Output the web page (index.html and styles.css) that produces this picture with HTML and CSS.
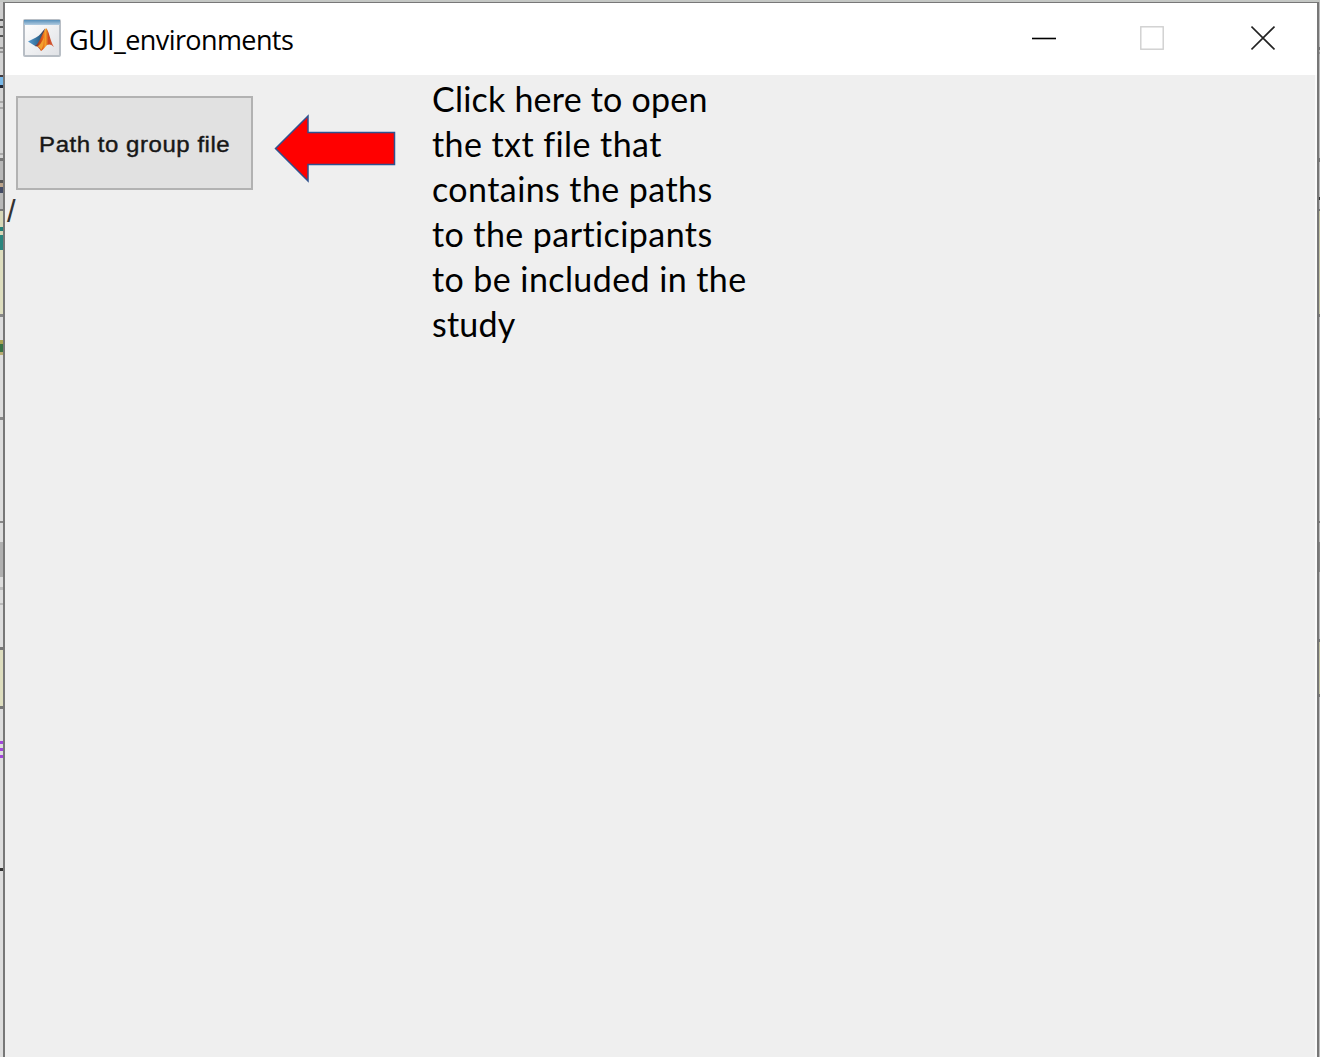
FILE: index.html
```html
<!DOCTYPE html>
<html lang="en">
<head>
<meta charset="utf-8">
<title>GUI_environments</title>
<link rel="stylesheet" href="styles.css">
</head>
<body>
<div class="desktop">
  <div class="edge edge-left"></div>
  <main class="window">
    <header class="titlebar">
      <svg class="app-icon" width="38" height="38" viewBox="0 0 38 38">
        <defs>
          <linearGradient id="bar" x2="0" y2="1"><stop stop-color="#5790bb"/><stop offset="1" stop-color="#b3cce0"/></linearGradient>
          <linearGradient id="paper" x2="1" y2="1"><stop stop-color="#fff"/><stop offset="1" stop-color="#dfe1e5"/></linearGradient>
          <linearGradient id="peak"><stop stop-color="#702f32"/><stop offset=".38" stop-color="#e35516"/><stop offset=".55" stop-color="#f5a12a"/><stop offset=".72" stop-color="#ce461c"/><stop offset="1" stop-color="#d66b50"/></linearGradient>
          <linearGradient id="wing"><stop stop-color="#559bd0"/><stop offset=".65" stop-color="#2e668f"/><stop offset="1" stop-color="#583440"/></linearGradient>
        </defs>
        <rect x="1" y="1" width="36" height="36" rx="1" fill="url(#paper)" stroke="#b8bec5" stroke-width="2"/>
        <path d="M1 1h36v5H1z" fill="url(#bar)"/>
        <path d="M5 22.500l8-4c4-2 6-6 9-9l-3 15-6 3z" fill="url(#wing)"/>
        <path d="M12 27c4-2 7-12 11-18 3 2 4 13 8 19-3-3-5-3-7-2-2 2-4 5-6 6-2-3-3-5-6-5z" fill="url(#peak)"/>
        <path d="M14 27.500c3-1 5-5 7-9 0 6-1 10-3 13-1-3-2-4-4-4z" fill="#f2a02f"/>
      </svg>
      <h1 class="title">GUI_environments</h1>
      <div class="controls">
        <svg width="24" height="26" viewBox="0 0 24 26"><path d="M0 13.500h24" stroke="#000" stroke-width="1.6"/></svg>
        <svg width="24" height="26" viewBox="0 0 24 26"><rect x=".8" y="1.800" width="22.400" height="22.400" fill="none" stroke="#cfcfcf" stroke-width="1.4"/></svg>
        <svg class="close" width="24" height="26" viewBox="0 0 24 26"><path d="M.5 1.500l23 23M23.500 1.500l-23 23" stroke="#222" stroke-width="1.6"/></svg>
      </div>
    </header>
    <div class="content">
      <div class="picker">
        <button class="path-button" type="button"><span class="button-label">Path to group file</span></button>
        <div class="path">/</div>
      </div>
      <svg class="arrow" width="122" height="70" viewBox="0 0 122 70">
        <path d="M1.500 35.500L34 3V19.500H120.500V51.500H34V68Z" fill="#f00" stroke="#2f528f" stroke-width="1.500"/>
      </svg>
      <p class="note">
        <span class="tight">Click here to open</span>
        <span>the txt file that</span>
        <span>contains the paths</span>
        <span>to the participants</span>
        <span>to be included in the</span>
        <span class="tight">study</span>
      </p>
    </div>
  </main>
  <div class="edge edge-right"></div>
</div>
</body>
</html>
```
FILE: styles.css
```css
body {
  margin: 0;
  overflow: hidden;
}

.desktop {
  box-sizing: border-box;
  display: flex;
  width: 1320px;
  height: 1057px;
  padding-top: 2px;
  background: linear-gradient(#c4c7c4 0 2px, transparent 2px), #d4d4d4;
}

.edge {
  flex: none;
  background-repeat: no-repeat;
}

/* Slivers of the editor window that stays open behind this one. */
.edge-left {
  width: 3px;
  background-image: linear-gradient(
    #cdcdcd 0 17px, #555 17px 19px, #cdcdcd 19px 24px, #555 24px 26px,
    #cdcdcd 26px 33px, #555 33px 35px, #cdcdcd 35px 45px, #888 45px 47px,
    #cdcdcd 47px 49px, #999 49px 51px, #d4d4d4 51px 73px, #443c40 73px 75px,
    #78b8e8 75px 83px, #202838 83px 86px, #d4d4d4 86px 99px, #aaa 99px 101px,
    #d4d4d4 101px 105px, #aaa 105px 107px, #d4d4d4 107px 151px, #aaa 151px 153px,
    #d4d4d4 153px 156px, #777 156px 159px, #b8b8b8 159px 178px, #555 178px 181px,
    #bba48b 181px 185px, #444c65 185px 191px, #b8b8b8 191px 207px, #777 207px 209px,
    #d8d8b8 209px 225px, #228078 225px 229px, #d8d8b8 229px 233px, #2b867e 233px 248px,
    #dedebf 248px 312px, #888 312px 315px, #ddd 315px 338px, #a9a454 338px 342px,
    #397346 342px 350px, #b9ad72 350px 353px, #ddd 353px 415px, #888 415px 418px,
    #ddd 418px 519px, #888 519px 521px, #ddd 521px 540px, #b0b0b0 540px 575px,
    #ddd 575px 585px, #bbb 585px 588px, #ddd 588px 601px, #bbb 601px 603px,
    #ddd 603px 645px, #777 645px 648px, #dedebf 648px 704px, #777 704px 707px,
    #ddd 707px 739px, #a246db 739px 742px, #ddd 742px 746px, #a246db 746px 749px,
    #ddd 749px 753px, #a246db 753px 756px, #ddd 756px 866px, #333 866px 869px,
    #ddd 869px);
}

.edge-right {
  width: 1px;
  background-image: linear-gradient(
    #bbb 0 45px, #777 45px 48px, #bbb 48px 50px, #999 50px 52px,
    #bbb 52px 156px, #777 156px 160px, #bbb 160px 195px, #333 195px 198px,
    #bbb 198px 207px, #777 207px 209px, #c2c2a5 209px 312px, #777 312px 315px,
    #bbb 315px 416px, #777 416px 418px, #bbb 418px 519px, #777 519px 521px,
    #bbb 521px 540px, #888 540px 570px, #bbb 570px 637px, #777 637px 640px,
    #c2c2a5 640px 692px, #777 692px 695px, #bbb 695px);
}

.window {
  box-sizing: border-box;
  display: flex;
  flex: 1;
  flex-direction: column;
  border: solid #777;
  border-width: 1px 2px 0;
  background: #efefef;
}

.titlebar {
  display: flex;
  flex: none;
  align-items: center;
  box-sizing: border-box;
  height: 72px;
  padding: 0 42px 2px 18px;
  background: #fff;
}

.app-icon {
  flex: none;
}

.title {
  margin: 4px 0 0 8px;
  font: 400 27px/36px "Open Sans", sans-serif;
  letter-spacing: -0.6px;
  white-space: nowrap;
  color: #000;
}

.controls {
  display: flex;
  gap: 84px;
  margin-left: auto;
}

.close {
  margin-left: 3px;
}

.content {
  display: flex;
  flex: 1;
  align-items: flex-start;
  border-right: 2px solid #fafafa;
}

.picker {
  width: 248px;
  padding-top: 21px;
  margin-right: 21px;
}

.path-button {
  display: block;
  width: 237px;
  height: 94px;
  margin-left: 11px;
  padding: 4px 0 0;
  border: 2px solid #b2b2b2;
  background: #e1e1e1;
  font: 400 22px/30px "Liberation Sans", Arial, sans-serif;
  white-space: nowrap;
  color: #171717;
}

.button-label {
  display: inline-block;
  -webkit-text-stroke: 0.4px #171717;
  letter-spacing: 0.5px;
  transform: scaleX(1.09);
}

.path {
  width: 10px;
  margin-left: 2px;
  font: 400 31px/44px "Liberation Sans", Arial, sans-serif;
  color: #333;
}

.arrow {
  flex: none;
  margin-top: 38px;
}

.note {
  margin: 1px 0 0 36px;
  font: 400 34px/45px Lato, Carlito, sans-serif;
  font-variant-ligatures: none;
  letter-spacing: 0.42px;
  white-space: nowrap;
  color: #000;
}

.note span {
  display: block;
}

.note .tight {
  letter-spacing: 0.22px;
}
```
